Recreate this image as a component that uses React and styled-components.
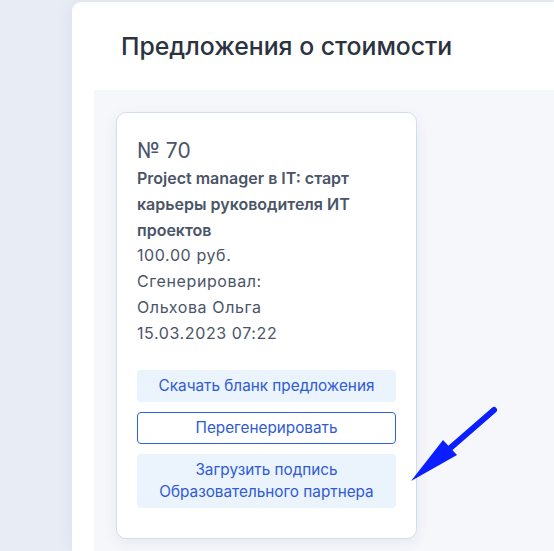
import React from 'react'
import styled, { createGlobalStyle } from 'styled-components'

const GlobalStyle = createGlobalStyle`
  body {
    margin: 0;
    background: #e8ecf5;
    font-family: Inter, "Noto Sans", sans-serif;
    overflow: hidden;
  }
`

const Page = styled.div`
  position: relative;
  width: 554px;
  height: 551px;
  padding: 2px 0 0 72px;
  box-sizing: border-box;
  overflow: hidden;
`

const Panel = styled.section`
  background: #fff;
  border-radius: 9px 0 0 0;
  height: 100%;
  box-shadow: 0 0 18px rgba(40, 60, 110, 0.08);
`

const Header = styled.h1`
  margin: 0;
  height: 88px;
  display: flex;
  align-items: center;
  padding-left: 49px;
  font-size: 24.8px;
  font-weight: 500;
  color: #2b3240;
`

const Content = styled.div`
  margin-left: 22px;
  height: 100%;
  background: #f6f7fb;
  padding: 22px;
`

const Card = styled.article`
  width: 301px;
  box-sizing: border-box;
  background: #fff;
  border: 1px solid #d3dcee;
  border-radius: 10px;
  padding: 23px 20px 30px;
  box-shadow: 0 4px 14px rgba(60, 80, 130, 0.08);
  color: #4a5567;
`

const Number = styled.div`
  font-size: 21px;
  line-height: 30px;
`

const Line = styled.div`
  font-size: 16px;
  line-height: 25.8px;
  font-weight: ${p => (p.bold ? 600 : 400)};
  letter-spacing: ${p => (p.bold ? '0' : '0.6px')};
  ${p => p.clip && 'max-width: 140px; white-space: nowrap; overflow: hidden;'}
`

const Actions = styled.div`
  display: flex;
  flex-direction: column;
  gap: 10px;
  margin-top: 23px;
`

const Button = styled.button`
  font-family: inherit;
  font-size: 15.3px;
  line-height: 22px;
  color: #2f5ad6;
  background: ${p => (p.outline ? '#fff' : '#ebf3fd')};
  border: 1px solid ${p => (p.outline ? '#2c63da' : 'transparent')};
  border-radius: 4px;
  padding: 4px 8px;
  min-height: ${p => (p.outline ? '31px' : '32px')};
  text-align: center;
  cursor: pointer;
`

const Arrow = styled.svg`
  position: absolute;
  left: 0;
  top: 0;
  pointer-events: none;
`

export default function App() {
  return (
    <Page>
      <GlobalStyle />
      <Panel>
        <Header>Предложения о стоимости</Header>
        <Content>
          <Card>
            <Number>№ 70</Number>
            <Line bold>Project manager в IT: старт карьеры руководителя ИТ проектов</Line>
            <Line>100.00 руб.</Line>
            <Line>Сгенерировал:</Line>
            <Line>Ольхова Ольга</Line>
            <Line clip>15.03.2023 07:22</Line>
            <Actions>
              <Button>Скачать бланк предложения</Button>
              <Button outline>Перегенерировать</Button>
              <Button>
                Загрузить подпись
                <br />
                Образовательного партнера
              </Button>
            </Actions>
          </Card>
        </Content>
      </Panel>
      <Arrow width="554" height="551" viewBox="0 0 554 551">
        <line x1="494" y1="410" x2="448" y2="450" stroke="#0a1eff" strokeWidth="6" strokeLinecap="round" />
        <polygon points="411,481 443,440 457,455" fill="#0a1eff" />
      </Arrow>
    </Page>
  )
}
